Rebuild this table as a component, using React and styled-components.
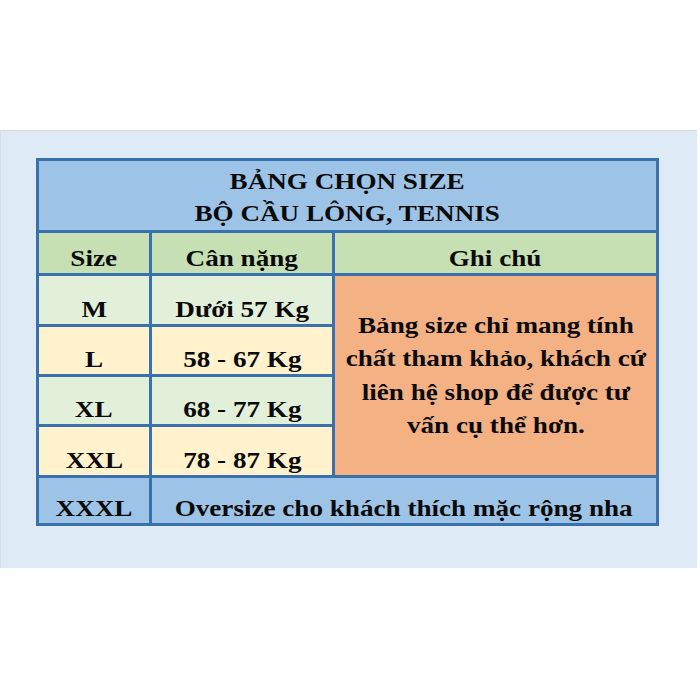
import React from 'react';
import styled, {createGlobalStyle} from 'styled-components';

const Global = createGlobalStyle`
  html, body {
    margin: 0;
    padding: 0;
    background: #ffffff;
  }
  body {
    width: 700px;
    height: 700px;
    overflow: hidden;
  }
`;

const Page = styled.div`
  padding-top: 130px;
`;

const Band = styled.div`
  width: 697px;
  height: 438px;
  background-color: #deeaf6;
  border-top: 1px solid #d3d8de;
  border-left: 1px solid #d9dee4;
  padding: 27px 0 0 35px;
  box-sizing: border-box;
`;

const Table = styled.div`
  display: grid;
  grid-template-columns: 110px 180px 321px;
  grid-template-rows: 69px 40px 48px 47px 47px 48px 45px;
  gap: 3px;
  padding: 3px;
  width: max-content;
  background-color: #3871ad;
  font-family: 'Liberation Serif', 'Times New Roman', serif;
  font-weight: bold;
  font-size: 24px;
  color: #0a0a0a;
`;

const Cell = styled.div`
  background-color: ${p => p.$bg};
  grid-column: ${p => p.$cols || 'auto'};
  grid-row: ${p => p.$rows || 'auto'};
  display: flex;
  justify-content: center;
  align-items: ${p => (p.$middle ? 'center' : 'flex-end')};
  padding-bottom: ${p => (p.$middle ? '0' : '1px')};
  overflow: hidden;
`;

const Text = styled.span`
  display: inline-block;
  white-space: nowrap;
  text-align: center;
  line-height: ${p => p.$lh || 'normal'};
  transform: scaleX(1.13);
`;

const colors = {
  title: '#9dc3e6',
  head: '#c6e0b4',
  green: '#e2efd9',
  cream: '#fff2cc',
  orange: '#f4b183',
};

const rows = [
  {size: 'M', weight: 'Dưới 57 Kg', bg: colors.green},
  {size: 'L', weight: '58 - 67 Kg', bg: colors.cream},
  {size: 'XL', weight: '68 - 77 Kg', bg: colors.green},
  {size: 'XXL', weight: '78 - 87 Kg', bg: colors.cream},
];

const App = () => {
  return (
    <Page>
      <Global />
      <Band>
        <Table>
          <Cell $bg={colors.title} $cols="1 / 4">
            <Text $lh="32px">
              BẢNG CHỌN SIZE
              <br />
              BỘ CẦU LÔNG, TENNIS
            </Text>
          </Cell>

          <Cell $bg={colors.head}>
            <Text>Size</Text>
          </Cell>
          <Cell $bg={colors.head}>
            <Text>Cân nặng</Text>
          </Cell>
          <Cell $bg={colors.head}>
            <Text>Ghi chú</Text>
          </Cell>

          {rows.map((r, i) => (
            <React.Fragment key={r.size}>
              <Cell $bg={r.bg} $cols="1" $rows={`${i + 3}`}>
                <Text>{r.size}</Text>
              </Cell>
              <Cell $bg={r.bg} $cols="2" $rows={`${i + 3}`}>
                <Text>{r.weight}</Text>
              </Cell>
            </React.Fragment>
          ))}

          <Cell $bg={colors.orange} $cols="3" $rows="3 / 7" $middle>
            <Text $lh="33.5px">
              Bảng size chỉ mang tính
              <br />
              chất tham khảo, khách cứ
              <br />
              liên hệ shop để được tư
              <br />
              vấn cụ thể hơn.
            </Text>
          </Cell>

          <Cell $bg={colors.title}>
            <Text>XXXL</Text>
          </Cell>
          <Cell $bg={colors.title} $cols="2 / 4">
            <Text>Oversize cho khách thích mặc rộng nha</Text>
          </Cell>
        </Table>
      </Band>
    </Page>
  );
};

export default App;
